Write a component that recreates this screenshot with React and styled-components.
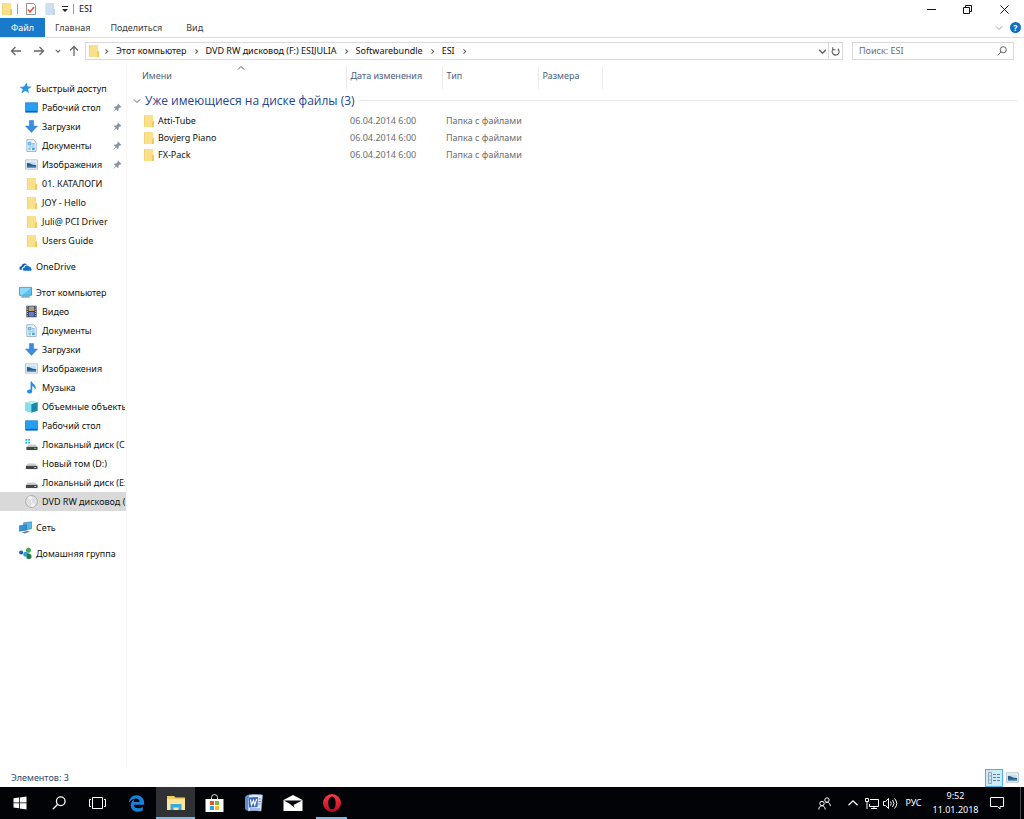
import React from "react";
import styled, { createGlobalStyle } from "styled-components";
import { FaEdgeLegacy } from "react-icons/fa6";

const GlobalStyle=createGlobalStyle`
    * {
        box-sizing: border-box;
    }
    body {
        margin: 0;
        background-color: #fff;
        color: #111;
        font-family: "Noto Sans", "Open Sans", sans-serif;
        font-size: 9px;
        line-height: 16px;
    }
    a {
        color: inherit;
        text-decoration: none;
    }
    button, input {
        font: inherit;
        color: inherit;
        background: none;
        border: none;
        padding: 0;
        margin: 0;
    }
    svg {
        display: block;
        flex: none;
    }
`;

const Window=styled.div`
    display: flex;
    flex-direction: column;
    min-height: 100vh;
`;

const TitleBar=styled.header`
    display: flex;
    align-items: center;
    height: 18px;
    padding-left: 1px;
`;

const QuickTools=styled.div`
    display: flex;
    align-items: center;
    gap: 4px;
`;

const Divider=styled.span`
    width: 1px;
    height: 10px;
    background-color: #9a9a9a;
`;

const Title=styled.h1`
    margin: 0 auto 0 5px;
    font-size: 9px;
    font-weight: 400;
`;

const IconButton=styled.button`
    display: flex;
    align-items: center;
    justify-content: center;
    min-width: ${props=>props.$width || 12}px;
    height: 18px;
`;

const Ribbon=styled.nav`
    display: flex;
    align-items: stretch;
    height: 20px;
    border-bottom: 1px solid #dedfe0;
`;

const Tab=styled.button`
    min-width: 45px;
    padding: 0 10px;
    color: ${props=>props.$active ? "#fff" : "#3c3c3c"};
    background-color: ${props=>props.$active ? "#1979ca" : "transparent"};
`;

const RibbonTools=styled.div`
    display: flex;
    align-items: center;
    gap: 5px;
    margin-left: auto;
    padding-right: 3px;
`;

const Help=styled.button`
    width: 11px;
    height: 11px;
    border-radius: 50%;
    background-color: #0f6fc6;
    color: #fff;
    font-weight: 700;
    line-height: 11px;
`;

const AddressRow=styled.div`
    display: flex;
    align-items: center;
    padding: 4px 10px 3px 7px;
`;

const History=styled.div`
    display: flex;
    align-items: center;
    width: 78px;
`;

const AddressBar=styled.div`
    display: flex;
    align-items: center;
    flex: 1;
    height: 18px;
    padding-left: 2px;
    border: 1px solid #d9d9d9;
`;

const Crumbs=styled.nav`
    display: flex;
    align-items: center;
    gap: 6px;
    margin-left: 3px;
    margin-right: auto;
`;

const Refresh=styled(IconButton)`
    height: 16px;
    border-left: 1px solid #d9d9d9;
`;

const Search=styled.label`
    display: flex;
    align-items: center;
    width: 162px;
    height: 18px;
    margin-left: 9px;
    padding: 0 6px;
    border: 1px solid #d9d9d9;
`;

const SearchInput=styled.input`
    flex: 1;
    min-width: 0;
    outline: none;

    &::placeholder {
        color: #6d6d6d;
        opacity: 1;
    }
`;

const Body=styled.div`
    display: flex;
    flex: 1;
    padding-top: 3px;
`;

const Sidebar=styled.aside`
    width: 127px;
    padding-top: 13px;
    border-right: 1px solid #f7f7f7;
`;

const Group=styled.ul`
    list-style: none;
    margin: 0 0 7px;
    padding: 0;
`;

const Item=styled.li`
    position: relative;
    background-color: ${props=>props.$selected ? "#d9d9d9" : "transparent"};
`;

const ItemLink=styled.a`
    display: flex;
    align-items: center;
    gap: 4px;
    height: 19px;
    margin-right: 1px;
    padding-left: ${props=>props.$root ? 19 : 25}px;
    overflow: hidden;
    white-space: nowrap;
`;

const Pin=styled.span`
    position: absolute;
    right: 4px;
    top: 5px;
`;

const Main=styled.main`
    flex: 1;
    padding: 0 6px;
`;

const Files=styled.table`
    width: 100%;
    table-layout: fixed;
    border-collapse: collapse;
    text-align: left;
`;

const ColumnHead=styled.th`
    position: relative;
    width: ${props=>props.$width ? `${props.$width}px` : "auto"};
    height: 23px;
    padding: 0 0 3px ${props=>props.$first ? 9 : 4}px;
    border-right: ${props=>props.$width ? "1px solid #e9e9e9" : "none"};
    color: #4c607a;
    font-weight: 400;
`;

const SortMark=styled.span`
    position: absolute;
    top: -2px;
    left: 49%;
`;

const GroupHead=styled.th`
    padding: 0;
    font-weight: 400;
`;

const GroupLine=styled.div`
    display: flex;
    align-items: center;
    gap: 4px;
    height: 23px;
    color: #2a3f8f;
    font-family: "Open Sans", "Noto Sans", sans-serif;
    font-size: 12px;

    &::after {
        content: "";
        flex: 1;
        height: 1px;
        background-color: #e8e8e8;
    }
`;

const Cell=styled.td`
    height: 17px;
    padding: 0 0 0 ${props=>props.$first ? 10 : 4}px;
    color: ${props=>props.$first ? "#111" : "#6d6d6d"};
    white-space: nowrap;
`;

const FileLink=styled.a`
    display: flex;
    align-items: center;
    gap: 3px;
`;

const StatusBar=styled.footer`
    display: flex;
    align-items: center;
    justify-content: space-between;
    height: 19px;
    padding: 0 3px 0 11px;
    color: #2c4468;
`;

const Views=styled.div`
    display: flex;
`;

const ViewButton=styled.button`
    display: flex;
    align-items: center;
    justify-content: center;
    width: 18px;
    height: 18px;
    border: 1px solid ${props=>props.$active ? "#45b4e8" : "transparent"};
    background-color: ${props=>props.$active ? "#cdeafa" : "transparent"};
`;

const TaskBar=styled.nav`
    display: flex;
    height: 32px;
    background-color: #020306;
    color: #fff;
`;

const TaskButton=styled.button`
    display: flex;
    align-items: center;
    justify-content: center;
    position: relative;
    width: 39px;
    background-color: ${props=>props.$active ? "#2f3134" : "transparent"};

    &::after {
        content: "";
        display: ${props=>props.$running ? "block" : "none"};
        position: absolute;
        bottom: 0;
        left: ${props=>props.$active ? 0 : 4}px;
        right: ${props=>props.$active ? 0 : 4}px;
        height: 2px;
        background-color: #76b9ed;
    }
`;

const Tray=styled.div`
    display: flex;
    align-items: center;
    margin-left: auto;
    padding-right: 3px;
`;

const TrayButton=styled.button`
    display: flex;
    align-items: center;
    justify-content: center;
    width: ${props=>props.$width || 19}px;
    height: 32px;
`;

const Clock=styled.time`
    width: 57px;
    text-align: center;
    line-height: 14px;
`;

const DesktopEdge=styled.span`
    width: 1px;
    height: 32px;
    margin-left: 10px;
    background-color: #4a4c50;
`;

const Folder=({pale=false})=>(
    <svg width="12" height="14" viewBox="0 0 12 14">
        <path d="M1 1h9v6h1v6H1z" fill={pale ? "#cfdff3" : "#fbe08a"} />
        <path d="M9 8l1-1h1v6H9z" fill={pale ? "#bdd2ee" : "#f1c95c"} />
        <path d="M1 1h1v12H1z" fill={pale ? "#dce8f7" : "#f5d377"} />
    </svg>
);

const Chevron=({dir="down", size=8, color="#666", weight=1})=>{
    const paths={
        down: "M1 2.5 4 5.5 7 2.5",
        up: "M1 5.5 4 2.5 7 5.5",
        right: "M2.8 1.5 5.3 4 2.8 6.5",
    };
    return (
        <svg width={size} height={size} viewBox="0 0 8 8" fill="none" stroke={color} strokeWidth={weight}>
            <path d={paths[dir]} />
        </svg>
    );
};

const Arrow=({turn=0, color="#666"})=>(
    <svg width="12" height="12" viewBox="0 0 12 12" fill="none" stroke={color} strokeWidth="1.3">
        <path d="M11 6H1.5M5.5 2l-4 4 4 4" transform={`rotate(${turn} 6 6)`} />
    </svg>
);

const Magnifier=({size=10, color="#555"})=>(
    <svg width={size} height={size} viewBox="0 0 12 12" fill="none" stroke={color} strokeWidth="1.1">
        <circle cx="7.5" cy="4.5" r="3.7" />
        <path d="M4.9 7.1.7 11.3" />
    </svg>
);

const PinIcon=()=>(
    <svg width="9" height="9" viewBox="0 0 9 9">
        <path d="M5 .5 8.5 4l-.8.5-.7-.2-1.5 1.5.1 1.7-.8.5-1.6-1.6L.5 8.7l-.2-.2L2.6 5.8 1 4.2l.5-.8 1.7.1L4.7 2l-.2-.7z" fill="#8795a3" />
    </svg>
);

const drawings={
    star: (
        <path d="M8.2.6 9 4.600l4.600.6-3.800 2.500.9 4.800-3.700-3-4.500 2.800 1.600-4.600L.6 5.500l4.800-.6z" fill="#2a96e0" />
    ),
    desktop: (
        <>
            <path d="M.2 1.500h13.600v11H.2z" fill="#1478d2" />
            <path d="M1 2.300h12v8.200H1z" fill="#25a0f2" />
            <path d="M1 11h12v1H1z" fill="#0c62b4" />
        </>
    ),
    download: (
        <path d="M4.700.5h4.600v6H13.500L7 13.500.5 6.500h4.200z" fill="#3a8ddc" stroke="#2c78c4" strokeWidth=".5" />
    ),
    document: (
        <>
            <path d="M2 .8h7.200L12 3.600v9.800H2z" fill="#f5faff" stroke="#7e9cb6" strokeWidth=".8" />
            <path d="M3.500 3.500h3v3h-3zM7.500 5h3M7.500 6.500h3M3.500 8.500h7M3.500 10h3M3.500 11.500h3" stroke="#4ba3dc" strokeWidth=".8" fill="#8fc8ee" />
            <path d="M7.500 9.500h3v2.500h-3z" fill="#4ba3dc" />
        </>
    ),
    picture: (
        <>
            <path d="M.5 2h13v10H.5z" fill="#f4f7fa" stroke="#a2b0bc" strokeWidth=".8" />
            <path d="M2 3.800h10v6.400H2z" fill="#bfe0f6" />
            <path d="M2 5.500c3-1 5 2.500 10 2v2.700H2z" fill="#35597b" />
            <path d="M2 9h10v1.200H2z" fill="#3a8ed0" />
        </>
    ),
    cloud: (
        <>
            <path d="M1 10.500C-.3 8.500 1 6.800 2.600 6.800 3 4 6.500 2.500 8.700 4.800c-2.200 0-3.400 1.200-3.900 2.700-1.900.3-2.300 1.800-1.600 3z" fill="#0b5bb0" />
            <path d="M5 11.500c-1.600-.6-1.500-3 .7-3.100.3-2.800 3.900-3.600 5.100-1.100 1.500-.3 2.300.9 2 1.800 1.400.5 1.100 2.400-.3 2.400z" fill="#1273cf" />
        </>
    ),
    computer: (
        <>
            <path d="M.5 1.500h13v8.500H.5z" fill="#5ec3f2" stroke="#3a7ea8" strokeWidth=".8" />
            <path d="M1 2h12L4 9.500H1z" fill="#8bdaf9" />
            <path d="M3 11h8l1.500 1.500h-11z" fill="#4b8fb5" />
        </>
    ),
    video: (
        <>
            <path d="M1.500.8h11v12.400h-11z" fill="#3a3d42" />
            <path d="M4 1.500h6v5H4z" fill="#8ea5c9" />
            <path d="M4 7.500h6v5H4z" fill="#5e7fd0" />
            <path d="M4 5l3-2 3 2v1.500H4z" fill="#c29b4e" />
            <path d="M2.700 1.500v11M11.300 1.500v11" stroke="#b5b5b5" strokeWidth="1" strokeDasharray="1.200 1.200" />
        </>
    ),
    music: (
        <path d="M6 .5h1.500c.3 2.600 4.500 3.500 4 7-.1 1-.6 1.800-1.200 2.300.6-2.700-1-3.800-2.500-4.500v5.400c0 3.600-5.600 3.400-5.600.7 0-1.900 2.100-2.600 3.800-2z" fill="#1f8fe6" />
    ),
    cube: (
        <>
            <path d="M.5 3 7 1l6.500 1.500v9L7 13.500.5 11.500z" fill="#30b9d0" />
            <path d="M.5 3 7 4.500v9l-6.500-2z" fill="#84e0ea" />
            <path d="M.5 3 7 1l6.500 1.500-6.500 2z" fill="#b8f0f4" />
            <path d="M7 4.500l6.500-2v9l-6.500 2z" fill="#168aa6" />
        </>
    ),
    system: (
        <>
            <path d="M.5 1h2v2h-2zM3.500 1h2v2h-2zM.5 4h2v2h-2zM3.500 4h2v2h-2z" fill="#1fb0e6" />
            <path d="M3.500 7h8l1.500 2.500H2z" fill="#c9cdd0" />
            <path d="M1.500 9.500h12V13h-12z" fill="#43474a" />
            <path d="M10 10.800h2v1h-2z" fill="#6fd06f" />
        </>
    ),
    disk: (
        <>
            <path d="M3 7h8l2 2.500H1z" fill="#c9cdd0" />
            <path d="M1 9.500h12.500V13H1z" fill="#43474a" />
            <path d="M10 10.800h2v1h-2z" fill="#d8d8d8" />
        </>
    ),
    dvd: (
        <>
            <circle cx="7" cy="7" r="6.400" fill="#dfe2e4" stroke="#9b9fa3" strokeWidth=".8" />
            <path d="M7 7 3 2.500A6 6 0 0 1 7 1zM7 7l4 4.500A6 6 0 0 1 7 13z" fill="#f3f3f3" />
            <circle cx="7" cy="7" r="1.600" fill="#fff" stroke="#b5b8bb" strokeWidth=".6" />
        </>
    ),
    network: (
        <>
            <path d="M5 2l8.500-1.200v7.500L5 10z" fill="#59b4e8" stroke="#33749e" strokeWidth=".6" />
            <path d="M.5 5l7.500-1v5.800L.5 11z" fill="#2f93d6" stroke="#2b6790" strokeWidth=".6" />
            <path d="M3 12.500l6-2 2.500 1-5.500 2z" fill="#5d7f97" />
        </>
    ),
    homegroup: (
        <>
            <circle cx="2.300" cy="6" r="2.200" fill="#1b5fae" />
            <circle cx="10.200" cy="3.500" r="2.700" fill="#46a758" />
            <circle cx="7.300" cy="7.700" r="2.700" fill="#2fa3d0" />
            <path d="M8.500 7.500c3-1.500 5 .5 5 3s-3 3-5.500 2z" fill="#1f7a4a" />
        </>
    ),
};

const Glyph=({name})=>{
    if(name==="folder"){
        return <Folder />;
    }
    return <svg width="13" height="13" viewBox="0 0 14 14" fill="none">{drawings[name]}</svg>;
};

const GlyphSlot=styled.span`
    display: flex;
    justify-content: flex-end;
    width: 13px;
`;

const groups=[
    [
        { label: "Быстрый доступ", icon: "star", root: true },
        { label: "Рабочий стол", icon: "desktop", pinned: true },
        { label: "Загрузки", icon: "download", pinned: true },
        { label: "Документы", icon: "document", pinned: true },
        { label: "Изображения", icon: "picture", pinned: true },
        { label: "01. КАТАЛОГИ", icon: "folder" },
        { label: "JOY - Hello", icon: "folder" },
        { label: "Juli@ PCI Driver", icon: "folder" },
        { label: "Users Guide", icon: "folder" },
    ],
    [
        { label: "OneDrive", icon: "cloud", root: true },
    ],
    [
        { label: "Этот компьютер", icon: "computer", root: true },
        { label: "Видео", icon: "video" },
        { label: "Документы", icon: "document" },
        { label: "Загрузки", icon: "download" },
        { label: "Изображения", icon: "picture" },
        { label: "Музыка", icon: "music" },
        { label: "Объемные объекты", icon: "cube" },
        { label: "Рабочий стол", icon: "desktop" },
        { label: "Локальный диск (C:)", icon: "system" },
        { label: "Новый том (D:)", icon: "disk" },
        { label: "Локальный диск (E:)", icon: "disk" },
        { label: "DVD RW дисковод (F:)", icon: "dvd", selected: true },
    ],
    [
        { label: "Сеть", icon: "network", root: true },
    ],
    [
        { label: "Домашняя группа", icon: "homegroup", root: true },
    ],
];

const crumbs=["Этот компьютер", "DVD RW дисковод (F:) ESIJULIA", "Softwarebundle", "ESI"];

const files=["Atti-Tube", "Bovjerg Piano", "FX-Pack"];

const App=()=>(
    <>
        <GlobalStyle />
        <Window>
            <TitleBar>
                <QuickTools>
                    <Folder />
                    <Divider />
                    <IconButton aria-label="Свойства" $width={18}>
                        <svg width="12" height="14" viewBox="0 0 12 14" fill="none">
                            <path d="M1.500 1.500h7l2 2v9h-9z" fill="#fff" stroke="#8d9297" />
                            <path d="M3 7.500l2 2.500 4-5" stroke="#e0532f" strokeWidth="1.500" />
                        </svg>
                    </IconButton>
                    <Folder pale />
                    <IconButton aria-label="Настройка панели" $width={9}>
                        <svg width="8" height="8" viewBox="0 0 8 8">
                            <path d="M1 1h6v1H1zM1 4h6L4 7z" fill="#222" />
                        </svg>
                    </IconButton>
                    <Divider />
                </QuickTools>
                <Title>ESI</Title>
                <IconButton aria-label="Свернуть" $width={36}>
                    <svg width="9" height="9" viewBox="0 0 9 9"><path d="M0 4h9v1H0z" fill="#111" /></svg>
                </IconButton>
                <IconButton aria-label="Восстановить" $width={36}>
                    <svg width="9" height="9" viewBox="0 0 9 9" fill="none" stroke="#111">
                        <path d="M.5 2.500h6v6h-6zM2.500 2.500v-2h6v6h-2" />
                    </svg>
                </IconButton>
                <IconButton aria-label="Закрыть" $width={39}>
                    <svg width="9" height="9" viewBox="0 0 9 9" stroke="#111"><path d="M.5.5l8 8M8.500.5l-8 8" /></svg>
                </IconButton>
            </TitleBar>

            <Ribbon aria-label="Лента">
                <Tab $active>Файл</Tab>
                <Tab>Главная</Tab>
                <Tab>Поделиться</Tab>
                <Tab>Вид</Tab>
                <RibbonTools>
                    <IconButton aria-label="Развернуть ленту"><Chevron color="#999" /></IconButton>
                    <Help>?</Help>
                </RibbonTools>
            </Ribbon>

            <AddressRow>
                <History>
                    <IconButton aria-label="Назад" $width={18}><Arrow /></IconButton>
                    <IconButton aria-label="Вперед" $width={28}><Arrow turn={180} /></IconButton>
                    <IconButton aria-label="Последние расположения" $width={10}><Chevron size={6} weight={1.5} /></IconButton>
                    <IconButton aria-label="Вверх" $width={22}><Arrow turn={90} /></IconButton>
                </History>
                <AddressBar>
                    <Folder />
                    <Crumbs aria-label="Путь">
                        <Chevron dir="right" size={7} weight={1.3} />
                        {crumbs.map(crumb=>(
                            <React.Fragment key={crumb}>
                                <a href="#path">{crumb}</a>
                                <Chevron dir="right" size={7} weight={1.3} />
                            </React.Fragment>
                        ))}
                    </Crumbs>
                    <IconButton aria-label="Предыдущие расположения"><Chevron size={9} weight={1.4} /></IconButton>
                    <Refresh aria-label="Обновить" $width={14}>
                        <svg width="9" height="9" viewBox="0 0 10 10" fill="none" stroke="#555" strokeWidth="1.200">
                            <path d="M7.500 2A3.900 3.900 0 1 1 2.200 2.500M2 .2v2.800h3" />
                        </svg>
                    </Refresh>
                </AddressBar>
                <Search>
                    <SearchInput type="text" aria-label="Поиск" placeholder="Поиск: ESI" />
                    <Magnifier />
                </Search>
            </AddressRow>

            <Body>
                <Sidebar>
                    {groups.map(group=>(
                        <Group key={group[0].label}>
                            {group.map(item=>(
                                <Item key={item.label} $selected={item.selected}>
                                    <ItemLink href="#folder" $root={item.root}>
                                        <GlyphSlot><Glyph name={item.icon} /></GlyphSlot>
                                        {item.label}
                                    </ItemLink>
                                    {item.pinned && <Pin><PinIcon /></Pin>}
                                </Item>
                            ))}
                        </Group>
                    ))}
                </Sidebar>

                <Main>
                    <Files>
                        <thead>
                            <tr>
                                <ColumnHead $first $width={213}>
                                    Имени
                                    <SortMark><Chevron dir="up" /></SortMark>
                                </ColumnHead>
                                <ColumnHead $width={96}>Дата изменения</ColumnHead>
                                <ColumnHead $width={96}>Тип</ColumnHead>
                                <ColumnHead $width={64}>Размера</ColumnHead>
                                <ColumnHead as="td" />
                            </tr>
                        </thead>
                        <tbody>
                            <tr>
                                <GroupHead colSpan={5}>
                                    <GroupLine>
                                        <Chevron />
                                        Уже имеющиеся на диске файлы (3)
                                    </GroupLine>
                                </GroupHead>
                            </tr>
                            {files.map(file=>(
                                <tr key={file}>
                                    <Cell $first>
                                        <FileLink href="#file"><Folder />{file}</FileLink>
                                    </Cell>
                                    <Cell>06.04.2014 6:00</Cell>
                                    <Cell>Папка с файлами</Cell>
                                    <Cell />
                                    <Cell />
                                </tr>
                            ))}
                        </tbody>
                    </Files>
                </Main>
            </Body>

            <StatusBar>
                <span>Элементов: 3</span>
                <Views>
                    <ViewButton $active aria-label="Таблица">
                        <svg width="14" height="12" viewBox="0 0 14 12" fill="none">
                            <path d="M1.500.5h3v11h-3zM1.500 4h3M1.500 8h3" stroke="#93a3b1" />
                            <path d="M6 2.500h8M6 5.500h8M6 8.500h8" stroke="#6a7a8a" strokeDasharray="3 1" />
                        </svg>
                    </ViewButton>
                    <ViewButton aria-label="Крупные значки"><Glyph name="picture" /></ViewButton>
                </Views>
            </StatusBar>

            <TaskBar aria-label="Панель задач">
                <TaskButton aria-label="Пуск">
                    <svg width="14" height="14" viewBox="0 0 14 14" fill="#fff">
                        <path d="M.5 2.300 6 1.500v5H.5zM6.800 1.400 13.500.4v6.100H6.800zM.5 7.300H6v5l-5.500-.8zM6.800 7.300h6.700v6.200l-6.700-1z" />
                    </svg>
                </TaskButton>
                <TaskButton aria-label="Поиск"><Magnifier size={14} color="#fff" /></TaskButton>
                <TaskButton aria-label="Представление задач">
                    <svg width="17" height="12" viewBox="0 0 17 12" fill="none" stroke="#fff">
                        <path d="M3.500.5h10v11h-10zM2 2.500H.5v7H2M15 2.500h1.500v7H15" />
                    </svg>
                </TaskButton>
                <TaskButton aria-label="Edge"><FaEdgeLegacy size={17} color="#1583dd" /></TaskButton>
                <TaskButton aria-label="Проводник" $active $running>
                    <svg width="18" height="16" viewBox="0 0 18 16">
                        <path d="M0 1h7l1.500 1.500H18V15H0z" fill="#f5cb5c" />
                        <path d="M0 4h18v11H0z" fill="#fde69a" />
                        <path d="M3.500 15V9h11v6h-3v-2.500h-5V15z" fill="#38a9e4" />
                    </svg>
                </TaskButton>
                <TaskButton aria-label="Магазин">
                    <svg width="19" height="19" viewBox="0 0 19 19" fill="none">
                        <path d="M6.500 6V3.500a3 3 0 0 1 6 0V6" stroke="#ddd" />
                        <path d="M.5 5h18v13H.5z" fill="#fff" />
                        <path d="M5 7h4v4H5z" fill="#ee5127" />
                        <path d="M10 7h4v4h-4z" fill="#7eb830" />
                        <path d="M5 12h4v4H5z" fill="#2aa4e4" />
                        <path d="M10 12h4v4h-4z" fill="#f8b921" />
                    </svg>
                </TaskButton>
                <TaskButton aria-label="Word">
                    <svg width="19" height="18" viewBox="0 0 19 18" fill="none">
                        <path d="M3 1.500C8 0 13 .3 18.500 1l-1.500 16c-5-.8-9-.8-13 0z" fill="#dfe9f8" stroke="#8fa9da" strokeWidth=".7" />
                        <path d="M1 3c1-1.500 2.500-2 4-1.800L4 16.500c-1.500 0-2.500-.6-3-1.800z" fill="#5f8ad0" />
                        <path d="M14.500 5h2.500M14.500 7.500h2.500M14 10h2.500M6 15h10" stroke="#6d90cf" />
                        <path d="M5 3.500l9-.5-.5 10-8.500.5z" fill="#3c68b8" />
                        <path d="M6.500 5.500l1 5.500 2-4.500 1.200 4.500 2-6" stroke="#fff" strokeWidth="1.200" />
                    </svg>
                </TaskButton>
                <TaskButton aria-label="Почта">
                    <svg width="20" height="18" viewBox="0 0 20 18">
                        <path d="M.5 6 10 1l9.500 5v11H.5z" fill="#fff" />
                        <path d="M1 6.500h18L10.500 11l1.500 3-5-4z" fill="#05070a" />
                    </svg>
                </TaskButton>
                <TaskButton aria-label="Opera" $running>
                    <svg width="18" height="18" viewBox="0 0 18 18">
                        <defs>
                            <linearGradient id="opera" x1="0" y1="0" x2="0" y2="1">
                                <stop offset="0" stopColor="#ff3b4a" />
                                <stop offset="1" stopColor="#b50d1b" />
                            </linearGradient>
                        </defs>
                        <path fillRule="evenodd" d="M9 0a9 9 0 1 0 0 18A9 9 0 1 0 9 0zm0 2.500c2.300 0 3.700 2.900 3.700 6.500s-1.400 6.500-3.700 6.500S5.300 12.600 5.300 9 6.700 2.500 9 2.500z" fill="url(#opera)" />
                    </svg>
                </TaskButton>

                <Tray>
                    <TrayButton aria-label="Люди" $width={38}>
                        <svg width="13" height="13" viewBox="0 0 13 13" fill="none" stroke="#fff" strokeWidth="1">
                            <circle cx="4" cy="6.500" r="2.200" />
                            <path d="M.8 12.500c0-5 6.400-5 6.400 0" />
                            <circle cx="9" cy="3" r="2.200" />
                            <path d="M7.500 5.800c2.700-1.300 4.800.5 4.800 3.200" />
                        </svg>
                    </TrayButton>
                    <TrayButton aria-label="Скрытые значки"><Chevron dir="up" size={12} color="#fff" weight={0.8} /></TrayButton>
                    <TrayButton aria-label="Сеть">
                        <svg width="14" height="13" viewBox="0 0 14 13" fill="none" stroke="#fff">
                            <path d="M5 2.500h8.500v7h-9V7M9 9.500v2M6 11.500h6M.5 1.500h3v3h-3zM2 4.500V12" />
                        </svg>
                    </TrayButton>
                    <TrayButton aria-label="Громкость">
                        <svg width="15" height="13" viewBox="0 0 15 13" fill="none" stroke="#fff">
                            <path d="M.5 4.500h2l3-3v10l-3-3h-2zM7.500 4.500q1.500 2 0 4M9.500 3q3 3.500 0 7M11.500 1.500q4.500 5 0 10" />
                        </svg>
                    </TrayButton>
                    <TrayButton $width={27}>РУС</TrayButton>
                    <Clock>9:52<br />11.01.2018</Clock>
                    <TrayButton aria-label="Уведомления" $width={26}>
                        <svg width="14" height="14" viewBox="0 0 14 14" fill="none" stroke="#fff">
                            <path d="M.5 1.500h13v9H10v2.500l-2.500-2.500h-7z" />
                        </svg>
                    </TrayButton>
                    <DesktopEdge />
                </Tray>
            </TaskBar>
        </Window>
    </>
);

export default App;
